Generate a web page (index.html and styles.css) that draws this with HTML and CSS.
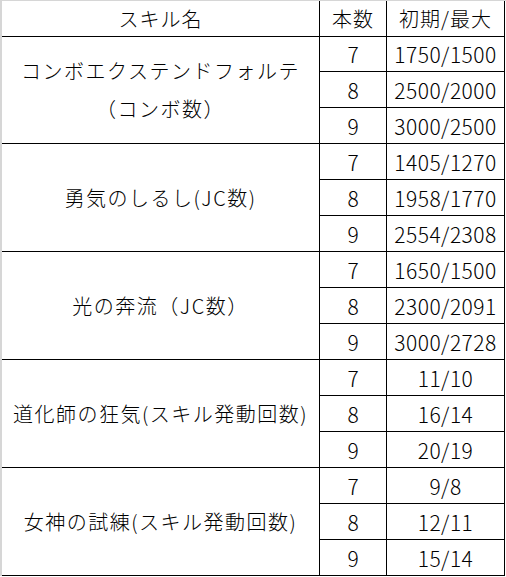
FILE: index.html
```html
<!DOCTYPE html>
<html lang="ja">
<head>
<meta charset="utf-8">
<title>スキル表</title>
<link rel="stylesheet" href="styles.css">
</head>
<body>
<div class="sheet">
<table class="grid">
<colgroup><col class="c-name"><col class="c-num"><col class="c-val"></colgroup>
<thead>
<tr><th>スキル名</th><th>本数</th><th>初期/最大</th></tr>
</thead>
<tbody>
<tr class="first"><td rowspan="3" class="name"><span class="two">コンボエクステンドフォルテ<br>（コンボ数）</span></td><td class="num">7</td><td class="val">1750/1500</td></tr>
<tr><td class="num">8</td><td class="val">2500/2000</td></tr>
<tr><td class="num">9</td><td class="val">3000/2500</td></tr>
<tr><td rowspan="3" class="name">勇気のしるし(JC数)</td><td class="num">7</td><td class="val">1405/1270</td></tr>
<tr><td class="num">8</td><td class="val">1958/1770</td></tr>
<tr><td class="num">9</td><td class="val">2554/2308</td></tr>
<tr><td rowspan="3" class="name">光の奔流（JC数）</td><td class="num">7</td><td class="val">1650/1500</td></tr>
<tr><td class="num">8</td><td class="val">2300/2091</td></tr>
<tr><td class="num">9</td><td class="val">3000/2728</td></tr>
<tr><td rowspan="3" class="name">道化師の狂気(スキル発動回数)</td><td class="num">7</td><td class="val">11/10</td></tr>
<tr><td class="num">8</td><td class="val">16/14</td></tr>
<tr><td class="num">9</td><td class="val">20/19</td></tr>
<tr><td rowspan="3" class="name">女神の試練(スキル発動回数)</td><td class="num">7</td><td class="val">9/8</td></tr>
<tr><td class="num">8</td><td class="val">12/11</td></tr>
<tr><td class="num">9</td><td class="val">15/14</td></tr>
</tbody>
</table>
</div>
</body>
</html>
```
FILE: styles.css
```css
html, body {
  margin: 0;
  padding: 0;
  background: #ffffff;
}
.sheet {
  width: 504px;
  border-top: 1px solid #d6d6d6;
  border-left: 2px solid #d6d6d6;
}
.grid {
  border-collapse: separate;
  border-spacing: 0;
  table-layout: fixed;
  width: 503px;
  font-family: "Noto Sans CJK JP", "Noto Sans", sans-serif;
  font-size: 20px;
  font-weight: 300;
  color: #000000;
}
.c-name { width: 318px; }
.c-num { width: 67px; }
.c-val { width: 118px; }
.grid th, .grid td {
  padding: 0;
  height: 35px;
  border-right: 1px solid #000000;
  border-bottom: 1px solid #000000;
  text-align: center;
  vertical-align: middle;
  font-weight: 300;
  line-height: 24px;
  white-space: nowrap;
}
.grid th {
  letter-spacing: 1px;
}
.grid tr.first td {
  height: 34px;
}
.grid td.name {
  letter-spacing: 1.5px;
}
.grid td.num {
  font-size: 21px;
}
.grid td.val {
  font-size: 21px;
  letter-spacing: 0.5px;
}
.two {
  display: inline-block;
  line-height: 38px;
}
```
